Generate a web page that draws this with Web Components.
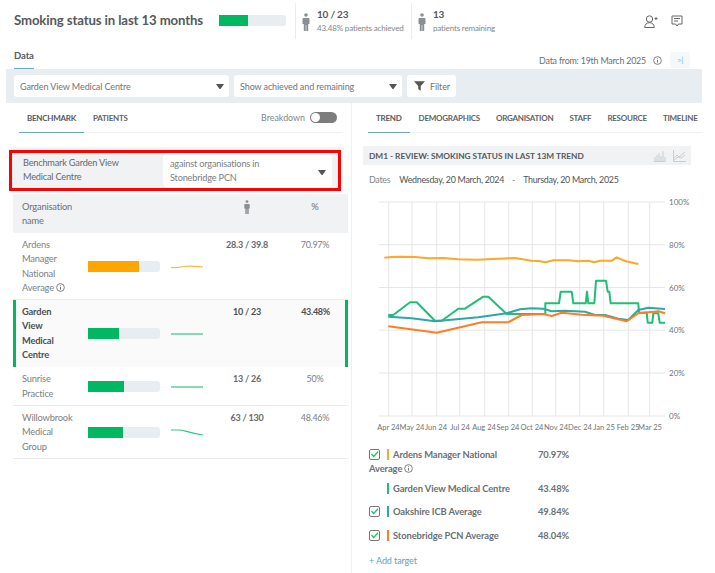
<!DOCTYPE html>
<html>
<head>
<meta charset="utf-8">
<style>
    html, body { margin: 0; padding: 0; background: #fff; }
    body { font-family: "Lato", "Noto Sans", sans-serif; color: #5f6368; width: 715px; height: 573px; overflow: hidden; }
</style>
</head>
<body>
<app-shell></app-shell>
<script>
const PERSON = `<svg width="8" height="18" viewBox="0 0 8 18"><circle cx="4" cy="2" r="1.8" fill="#8a8f93"/><path d="M1.500 5h5q1 0 1 1v5H6.200v7H4.300v-6H3.700v6H1.800v-7H.5V6q0-1 1-1z" fill="#8a8f93"/></svg>`;
const INFO = `<svg width="9" height="9" viewBox="0 0 10 10" style="vertical-align:-1px"><circle cx="5" cy="5" r="4.3" fill="none" stroke="#666" stroke-width=".9"/><path d="M5 4.400v3M5 2.500v1" stroke="#666" stroke-width="1"/></svg>`;
const CARET = `<svg width="8" height="5" viewBox="0 0 8 5"><path d="M0 0h8L4.500 5h-1z" fill="#555"/></svg>`;

class MiniBar extends HTMLElement {
    constructor () {
        super();
        const shadow = this.attachShadow({ mode: 'open' });
        const w = this.getAttribute('fill');
        const c = this.getAttribute('color') || '#00b862';
        shadow.innerHTML = `<style>
            :host { display: block; width: var(--bar-w, 72px); height: var(--bar-h, 11px); background: #e8edf1; border-radius: 0 3px 3px 0; overflow: hidden; }
            div { height: 100%; background: ${c}; width: ${w}; }
        </style><div></div>`;
    }
}
customElements.define('mini-bar', MiniBar);

class StatBlock extends HTMLElement {
    constructor () {
        super();
        const shadow = this.attachShadow({ mode: 'open' });
        shadow.innerHTML = `<style>
            :host { display: flex; align-items: center; gap: 7px; height: 36px; border-left: 1px solid #e9ecef; padding-left: 6px; box-sizing: border-box; }
            .ic { padding-top: 4px; }
            b { display: block; font-size: 10px; letter-spacing: -.2px; line-height: 14px; color: #55595d; }
            span { display: block; font-size: 8px; letter-spacing: -.15px; line-height: 14px; color: #80868b; white-space: nowrap; }
        </style>
        <div class="ic">${PERSON}</div>
        <div><b><slot name="num"></slot></b><span><slot name="sub"></slot></span></div>`;
    }
}
customElements.define('stat-block', StatBlock);

class AppHeader extends HTMLElement {
    constructor () {
        super();
        const shadow = this.attachShadow({ mode: 'open' });
        shadow.innerHTML = `<style>
            :host { display: flex; align-items: center; height: 38px; padding: 2px 0 0 14px; box-sizing: content-box; }
            h1 { font-size: 13.200px; font-weight: 700; margin: -2px 0 0; color: #55595d; width: 205px; white-space: nowrap; letter-spacing: -.12px; }
            mini-bar { --bar-w: 67px; --bar-h: 11px; margin: -1px 9px 0 0; }
            stat-block.a { width: 116px; }
            stat-block.b { width: 210px; }
            .icons { display: flex; gap: 13px; align-items: center; margin-left: 23px; }
        </style>
        <h1>Smoking status in last 13 months</h1>
        <mini-bar fill="43.48%"></mini-bar>
        <stat-block class="a"><span slot="num">10 / 23</span><span slot="sub">43.48% patients achieved</span></stat-block>
        <stat-block class="b"><span slot="num">13</span><span slot="sub">patients remaining</span></stat-block>
        <div class="icons">
            <svg width="14" height="13" viewBox="0 0 14 13" fill="none" stroke="#666" stroke-width="1"><circle cx="5.500" cy="4" r="3.200"/><path d="M.7 12.500c0-3 2-4.800 4.800-4.800s4.800 1.800 4.800 4.800zM10.500 3.500h3M12 2v3"/></svg>
            <svg width="12" height="13" viewBox="0 0 12 13" fill="none" stroke="#666" stroke-width="1"><path d="M1 1h10v8H7.500L6 11 4.500 9H1z"/><path d="M3 3.500h6M3 6h4"/></svg>
        </div>`;
    }
}
customElements.define('app-header', AppHeader);

class DataBar extends HTMLElement {
    constructor () {
        super();
        const shadow = this.attachShadow({ mode: 'open' });
        shadow.innerHTML = `<style>
            :host { display: flex; align-items: flex-end; height: 29px; padding: 0 25px 0 14px; }
            .tab { font-size: 9.500px; font-weight: 700; color: #55595d; height: 19px; border-bottom: 1px solid #6fa8cf; box-sizing: border-box; letter-spacing: -.1px; }
            .from { margin-left: auto; display: flex; align-items: center; font-size: 8.900px; letter-spacing: -.2px; color: #6a6f74; height: 16px; margin-bottom: 1px; }
            .from span { white-space: nowrap; }
            .from svg { margin-left: 7px; }
            .end { margin-left: 8px; width: 20px; height: 16px; background: #f5f8fb; color: #7fb2d8; font-size: 8px; text-align: center; line-height: 16px; border-radius: 2px; }
        </style>
        <div class="tab">Data</div>
        <div class="from"><span>Data from: 19th March 2025</span>${INFO}<div class="end">&gt;|</div></div>`;
    }
}
customElements.define('data-bar', DataBar);

class FilterBar extends HTMLElement {
    constructor () {
        super();
        const shadow = this.attachShadow({ mode: 'open' });
        shadow.innerHTML = `<style>
            :host { display: flex; gap: 5px; align-items: center; height: 34px; margin: 0 13px 0 6px; padding: 0 8px; background: #e8edf1; box-sizing: border-box; }
            .sel { height: 22px; background: #fff; border-radius: 3px; display: flex; align-items: center; justify-content: space-between; padding: 0 5px 0 6px; box-sizing: border-box; font-size: 9px; letter-spacing: -.1px; color: #6f7478; }
            .one { width: 215px; }
            .two { width: 168px; }
            .btn { width: 49px; justify-content: flex-start; gap: 5px; padding: 0 0 0 7px; }
        </style>
        <div class="sel one"><span>Garden View Medical Centre</span>${CARET}</div>
        <div class="sel two"><span>Show achieved and remaining</span>${CARET}</div>
        <div class="sel btn"><svg width="11" height="10" viewBox="0 0 13 11"><path d="M0 0h13L8 5.500V11L5 9V5.500z" fill="#555"/></svg><span>Filter</span></div>`;
    }
}
customElements.define('filter-bar', FilterBar);

class TabStrip extends HTMLElement {
    constructor () {
        super();
        const shadow = this.attachShadow({ mode: 'open' });
        shadow.innerHTML = `<style>
            :host { display: flex; height: 30px; border-bottom: 1px solid #eef0f2; box-sizing: border-box; align-items: stretch; }
            ::slotted(tab-item) { margin-right: 16px; }
            .end { margin-left: auto; display: flex; align-items: center; }
        </style><slot></slot><div class="end"><slot name="end"></slot></div>`;
    }
}
customElements.define('tab-strip', TabStrip);

class TabItem extends HTMLElement {
    constructor () {
        super();
        const shadow = this.attachShadow({ mode: 'open' });
        shadow.innerHTML = `<style>
            :host { display: flex; align-items: center; font-size: 8px; font-weight: 700; color: #5f6368; white-space: nowrap; height: 30px; box-sizing: border-box; letter-spacing: -.25px; }
            :host([active]) { border-bottom: 1px solid #6fa8cf; padding: 0 8px; margin-right: 9px !important; color: #55595d; }
        </style><slot></slot>`;
    }
}
customElements.define('tab-item', TabItem);

class ToggleSwitch extends HTMLElement {
    constructor () {
        super();
        const shadow = this.attachShadow({ mode: 'open' });
        shadow.innerHTML = `<style>
            :host { display: flex; align-items: center; gap: 5px; font-size: 8.900px; color: #80868b; padding-right: 5px; }
            .t { width: 27px; height: 11px; border-radius: 6px; background: #7d7d7d; position: relative; }
            .t::after { content: ''; position: absolute; left: 1px; top: 1px; width: 9px; height: 9px; border-radius: 50%; background: #fff; }
        </style><slot></slot><div class="t"></div>`;
    }
}
customElements.define('toggle-switch', ToggleSwitch);

class BenchmarkBox extends HTMLElement {
    constructor () {
        super();
        const shadow = this.attachShadow({ mode: 'open' });
        shadow.innerHTML = `<style>
            :host { display: flex; height: 41px; margin-left: 3px; width: 332px; border: 3px solid #f00; box-sizing: border-box; background: #f0f2f4; font-size: 9.200px; letter-spacing: -.2px; line-height: 14.300px; color: #66696d; }
            .l { width: 151px; padding: 3px 0 0 11px; box-sizing: border-box; }
            .r { width: 169px; height: 35px; background: #fff; border-radius: 5px; padding: 4px 6px 0 7px; box-sizing: border-box; display: flex; justify-content: space-between; align-items: center; color: #7a7f84; }
            .r span { width: 130px; margin-top: -3px; }
        </style>
        <div class="l">Benchmark Garden View<br>Medical Centre</div>
        <div class="r"><span>against organisations in Stonebridge PCN</span>${CARET}</div>`;
    }
}
customElements.define('benchmark-box', BenchmarkBox);

class OrgRow extends HTMLElement {
    constructor () {
        super();
        const shadow = this.attachShadow({ mode: 'open' });
        const a = n => this.getAttribute(n) || '';
        const pathD = a('spark');
        shadow.innerHTML = `<style>
            :host { display: grid; grid-template-columns: 75px 83px 37px 78px 58px; align-items: start; border-bottom: 1px solid #e9ecef; font-size: 9.300px; letter-spacing: -.17px; line-height: 14.300px; color: #7b8084; box-sizing: border-box; padding: 5px 0 4px; }
            :host([current]) { grid-template-columns: 72px 83px 37px 78px 59px; background: #fafafa; border-left: 3px solid #00b862; border-right: 3px solid #00b862; border-bottom: none; color: #4c5054; font-weight: 700; padding: 5px 0; }
            .name { padding: 0 14px 0 9px; }
            :host([current]) .name { padding: 0 24px 0 6px; }
            .v { text-align: center; font-weight: 700; font-size: 9px; letter-spacing: -.2px; color: #66696d; }
            :host([current]) .v { color: #4c5054; }
            .p { text-align: center; font-size: 9px; letter-spacing: -.3px; }
            .bar, .sp { align-self: center; }
            .sp svg { display: block; }
            mini-bar { --bar-h: 11px; }
        </style>
        <div class="name"><slot></slot></div>
        <div class="bar"><mini-bar fill="${a('fill')}" color="${a('color') || '#00b862'}"></mini-bar></div>
        <div class="sp"><svg width="32" height="10" viewBox="0 0 32 10"><path d="${pathD}" fill="none" stroke="${a('spcolor') || '#2fc785'}" stroke-width="1.200"/></svg></div>
        <div class="v">${a('value')}</div>
        <div class="p">${a('pct')}</div>`;
    }
}
customElements.define('org-row', OrgRow);

class OrgTable extends HTMLElement {
    constructor () {
        super();
        const shadow = this.attachShadow({ mode: 'open' });
        shadow.innerHTML = `<style>
            :host { display: block; margin: 3px 0 0 7px; width: 335px; }
            .head { display: grid; grid-template-columns: 75px 120px 78px 58px; height: 39px; background: #f0f2f4; font-size: 9.300px; letter-spacing: -.17px; line-height: 14.300px; color: #6b7074; padding-top: 6px; box-sizing: border-box; }
            .head > div:first-child { padding: 0 14px 0 9px; }
            .c { text-align: center; }
            .c svg { display: block; margin: 0 auto; height: 14px; }
        </style>
        <div class="head"><div>Organisation name</div><div></div><div class="c">${PERSON}</div><div class="c">%</div></div>
        <slot></slot>`;
    }
}
customElements.define('org-table', OrgTable);

class TrendChart extends HTMLElement {
    constructor () {
        super();
        const shadow = this.attachShadow({ mode: 'open' });
        // coordinates read off the zoomed crops (3x), converted back to page px
        const conv = (ox, oy, pts) => pts.map(p => (ox + p[0] / 3).toFixed(1) + ',' + (oy + p[1] / 3).toFixed(1)).join(' ');
        const gold = conv(355, 140, [[88,353],[110,351],[140,350],[180,351],[220,355],[265,354],[310,358],[365,359],[430,356],[480,354],[530,362],[550,363],[572,367],[595,361],[640,361],[670,364],[700,362],[718,367],[735,362],[770,362],[785,352],[810,363],[850,372]]);
        const green = conv(365, 270, [[70,135],[85,135],[135,97],[155,97],[210,152],[230,152],[280,116],[300,116],[355,80],[370,80],[425,132],[535,132],[541,132],[541,100],[582,100],[587,65],[620,65],[625,100],[662,100],[666,65],[670,100],[688,100],[693,32],[723,32],[728,65],[733,65],[737,100],[820,100],[822,128],[845,128],[848,158],[862,158],[865,130],[880,130],[884,158],[900,158]]);
        const teal = conv(365, 270, [[70,140],[140,145],[210,154],[340,142],[425,130],[465,118],[500,115],[535,116],[560,124],[600,122],[660,125],[690,135],[720,135],[760,146],[790,150],[820,120],[850,113],[900,117]]);
        const orange = conv(365, 270, [[70,169],[215,188],[350,157],[430,157],[470,135],[535,132],[560,138],[590,128],[650,134],[715,137],[785,154],[820,130],[880,124],[900,130]]);
        const xs = [388.7,412,436.7,459.7,484.7,508.7,532.3,555.7,579.7,603.7,628.3,649.7];
        const ys = [[202,'100%'],[244.7,'80%'],[287.5,'60%'],[330.2,'40%'],[373,'20%'],[416,'0%']];
        const labels = ['Apr 24','May 24','Jun 24','Jul 24','Aug 24','Sep 24','Oct 24','Nov 24','Dec 24','Jan 25','Feb 25','Mar 25'];
        const lx = [388.5,412,436,460,484,508,532,556,580,604,628,650];
        shadow.innerHTML = `<style>
            :host { display: block; height: 243px; margin-top: 8px; }
            svg { display: block; }
            text { font-family: "Lato", "Noto Sans", sans-serif; font-size: 7.500px; fill: #6f7478; }
            polyline { fill: none; stroke-width: 2; stroke-linejoin: round; }
        </style>
        <svg width="350" height="243" viewBox="352 194 350 243">
            ${xs.map(x => `<line x1="${x}" x2="${x}" y1="202" y2="416" stroke="#e6e6e6"/>`).join('')}
            ${ys.map(y => `<line x1="379" x2="665" y1="${y[0]}" y2="${y[0]}" stroke="#e6e6e6"/><text x="669" y="${y[0] + 3}" style="font-size:8px">${y[1]}</text>`).join('')}
            <polyline points="${gold}" stroke="#ffa726"/>
            <polyline points="${green}" stroke="#1fbf75"/>
            <polyline points="${teal}" stroke="#2ba8a8"/>
            <polyline points="${orange}" stroke="#ff7d26"/>
            ${labels.map((l, i) => `<text x="${lx[i]}" y="430" text-anchor="middle">${l}</text>`).join('')}
        </svg>`;
    }
}
customElements.define('trend-chart', TrendChart);

class LegendRow extends HTMLElement {
    constructor () {
        super();
        const shadow = this.attachShadow({ mode: 'open' });
        const color = this.getAttribute('color');
        const check = this.hasAttribute('checked');
        shadow.innerHTML = `<style>
            :host { display: grid; grid-template-columns: 169px 1fr; font-size: 9.400px; letter-spacing: -.1px; font-weight: 700; line-height: 14.300px; color: #6b7074; margin-bottom: 9.200px; }
            :host([tight]) { margin-bottom: 5.400px; }
            .box { display: inline-block; width: 11px; height: 11px; vertical-align: -2px; margin-right: 7px; }
            .box svg { display: block; }
            .bar { display: inline-block; width: 2px; height: 11px; background: ${color}; vertical-align: -2px; margin-right: 4px; }
            .txt { width: 160px; }
        </style>
        <div class="txt"><span class="box">${check ? `<svg width="11" height="11" viewBox="0 0 11 11"><rect x=".5" y=".5" width="10" height="10" rx="1.500" fill="none" stroke="#777"/><path d="M2.500 5l2.200 2.500L9 2.700" fill="none" stroke="#1fbf75" stroke-width="1.300"/></svg>` : ''}</span><span class="bar"></span><slot></slot></div>
        <div>${this.getAttribute('pct')}</div>`;
    }
}
customElements.define('legend-row', LegendRow);

class TrendPanel extends HTMLElement {
    constructor () {
        super();
        const shadow = this.attachShadow({ mode: 'open' });
        shadow.innerHTML = `<style>
            :host { display: block; }
            .title { display: flex; align-items: center; justify-content: space-between; margin: 13px 11px 0 11px; height: 19px; padding: 0 5px 0 6px; background: #f0f2f4; font-size: 8.300px; font-weight: 700; color: #55595d; }
            .title div { display: flex; gap: 7px; }
            .dates { display: flex; font-size: 8.900px; letter-spacing: -.28px; color: #4f5357; padding: 7px 0 0 17px; height: 21px; box-sizing: border-box; align-items: center; }
            .dates span:first-child { color: #80868b; margin-right: 9px; }
            .dates i { font-style: normal; margin: 0 8px; color: #80868b; }
            .legend { padding: 11px 0 0 17px; }
            .add { color: #5b9fd0; font-size: 9px; letter-spacing: -.1px; margin-top: 12px; }
        </style>
        <div class="title"><span>DM1 - REVIEW: SMOKING STATUS IN LAST 13M TREND</span>
            <div>
                <svg width="13" height="12" viewBox="0 0 13 12" stroke="#c9ccd0" fill="none"><path d="M.5 11.500h12M2 11V7M4 11V5M6 11V3M8 11V6M10 11V1M12 11V7"/></svg>
                <svg width="13" height="12" viewBox="0 0 13 12" stroke="#c9ccd0" fill="none"><path d="M.5 0v11.500h12.500M1 8l3-3 2 2 6-5M1 10l4-3 3 1 4-3"/></svg>
            </div>
        </div>
        <div class="dates"><span>Dates</span><span>Wednesday, 20 March, 2024</span><i>-</i><span>Thursday, 20 March, 2025</span></div>
        <trend-chart></trend-chart>
        <div class="legend">
            <legend-row tight color="#ffa726" checked pct="70.97%">Ardens Manager National Average ${INFO}</legend-row>
            <legend-row color="#1fbf75" pct="43.48%">Garden View Medical Centre</legend-row>
            <legend-row color="#2ba8a8" checked pct="49.84%">Oakshire ICB Average</legend-row>
            <legend-row color="#ff7d26" checked pct="48.04%">Stonebridge PCN Average</legend-row>
            <div class="add">+ Add target</div>
        </div>`;
    }
}
customElements.define('trend-panel', TrendPanel);

class AppShell extends HTMLElement {
    constructor () {
        super();
        const shadow = this.attachShadow({ mode: 'open' });
        shadow.innerHTML = `<style>
            :host { display: block; width: 715px; }
            .cols { display: grid; grid-template-columns: 346px 350px; margin-left: 6px; }
            .left { border-right: 1px solid #eef0f2; height: 470px; }
            .left tab-strip { margin: 0 9px 0 13px; }
            .gap { margin: 0 7px; border-bottom: 3px solid #f4f5f6; height: 17px; box-sizing: border-box; }
            .right { overflow: hidden; }
            .right tab-strip { margin-left: 16px; }
        </style>
        <app-header></app-header>
        <data-bar></data-bar>
        <filter-bar></filter-bar>
        <div class="cols">
            <div class="left">
                <tab-strip>
                    <tab-item active>BENCHMARK</tab-item><tab-item>PATIENTS</tab-item>
                    <toggle-switch slot="end">Breakdown</toggle-switch>
                </tab-strip>
                <div class="gap"></div>
                <benchmark-box></benchmark-box>
                <org-table>
                    <org-row fill="71%" color="#ffa500" spcolor="#ffb53a" spark="M0 5.500C5 6 8 5.500 13 4.500 18 3.500 22 4 32 5" value="28.3 / 39.8" pct="70.97%">Ardens Manager National Average ${INFO}</org-row>
                    <org-row current fill="43.48%" spark="M0 5h32" value="10 / 23" pct="43.48%">Garden View Medical Centre</org-row>
                    <org-row fill="50%" spark="M0 5h32" value="13 / 26" pct="50%">Sunrise Practice</org-row>
                    <org-row fill="48.46%" spark="M0 3h9c5 .500 9 3 23 5" value="63 / 130" pct="48.46%">Willowbrook Medical Group</org-row>
                </org-table>
            </div>
            <div class="right">
                <tab-strip>
                    <tab-item active>TREND</tab-item><tab-item>DEMOGRAPHICS</tab-item><tab-item>ORGANISATION</tab-item><tab-item>STAFF</tab-item><tab-item>RESOURCE</tab-item><tab-item>TIMELINE</tab-item>
                </tab-strip>
                <trend-panel></trend-panel>
            </div>
        </div>`;
    }
}
customElements.define('app-shell', AppShell);
</script>
</body>
</html>
